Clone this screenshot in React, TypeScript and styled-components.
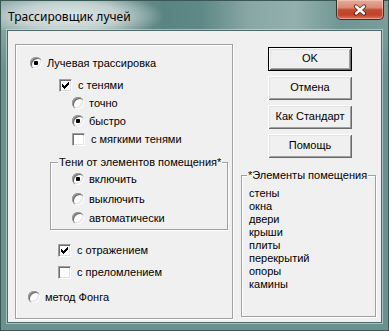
import React from "react";
import styled, { createGlobalStyle } from "styled-components";

const Global = createGlobalStyle`
  html, body { margin: 0; padding: 0; background: #6a9392; }
  body { width: 389px; height: 331px; overflow: hidden; }
  * { box-sizing: border-box; }
`;

const Window = styled.div`
  width: 389px;
  height: 331px;
  display: flex;
  flex-direction: column;
  border: 1px solid #3a5655;
  padding: 0 6px 7px 6px;
  background:
    linear-gradient(180deg, rgba(104, 145, 144, 0) 0px, rgba(104, 145, 144, 0) 28px, #689190 70px),
    linear-gradient(90deg, #86a3a1 0%, #819f9d 25%, #5a8482 42%, #5f8987 52%, #88a7a5 64%, #93b0ae 76%, #6f9694 88%, #7a9d9b 100%);
`;

const TitleBar = styled.div`
  height: 29px;
  flex: none;
  display: flex;
  align-items: flex-start;
  justify-content: space-between;
  margin: 0 -6px;
  padding: 0 4px 0 7px;
  background: radial-gradient(ellipse 95px 24px at 68px 15px, rgba(226, 235, 234, 0.95) 0%, rgba(220, 230, 229, 0.7) 55%, rgba(220, 230, 229, 0) 100%);
`;

const TitleText = styled.span`
  margin-top: 8px;
  font-family: "Noto Sans", "Liberation Sans", sans-serif;
  font-size: 12px;
  line-height: 15px;
  color: #000;
`;

const CloseButton = styled.div`
  width: 48px;
  height: 20px;
  margin-top: -1px;
  border: 1px solid #4a2a24;
  border-top: none;
  border-radius: 0 0 5px 5px;
  background: linear-gradient(180deg, #e9ab99 0%, #d98a74 40%, #c4492e 52%, #c3432a 78%, #dc7554 100%);
  box-shadow: inset 0 0 0 1px rgba(255, 220, 210, 0.45);
  display: flex;
  align-items: center;
  justify-content: center;
`;

const Client = styled.div`
  flex: 1;
  display: flex;
  align-items: flex-start;
  padding: 13px 5px 0 7px;
  background: #f0f0f0;
  border: 1px solid #4f6867;
  box-shadow: 0 0 0 1px rgba(220, 232, 231, 0.55);
  font-family: "Liberation Sans", Arial, sans-serif;
  font-size: 11px;
  color: #000;
`;

const GroupBox = styled.div<{ $w: number; $h: number; $left?: number; $top?: number }>`
  width: ${(p) => p.$w}px;
  height: ${(p) => p.$h}px;
  flex: none;
  margin-left: ${(p) => p.$left ?? 0}px;
  margin-top: ${(p) => p.$top ?? 0}px;
  border: 1px solid #a0a0a0;
  box-shadow: inset 1px 1px 0 #fff, 1px 1px 0 #fff;
  display: flex;
  flex-direction: column;
  align-items: flex-start;
`;

const GroupTitle = styled.div<{ $left: number }>`
  margin: -7px 0 0 ${(p) => p.$left}px;
  padding: 0 1px;
  background: #f0f0f0;
  line-height: 13px;
  white-space: nowrap;
`;

const Option = styled.div<{ $indent: number; $top?: number }>`
  height: 18px;
  display: flex;
  align-items: center;
  margin-left: ${(p) => p.$indent}px;
  margin-top: ${(p) => p.$top ?? 0}px;
  white-space: nowrap;
  line-height: 13px;
`;

const Radio = styled.span<{ $checked?: boolean }>`
  width: 12px;
  height: 12px;
  flex: none;
  margin-right: 5px;
  border-radius: 50%;
  background: #fff;
  box-shadow: inset 1px 1px 0 #a0a0a0, inset 2px 2px 0 #6e6e6e, inset -1px -1px 0 #fff, inset -2px -2px 0 #e3e3e3;
  display: flex;
  align-items: center;
  justify-content: center;
  &::after {
    content: "";
    display: ${(p) => (p.$checked ? "block" : "none")};
    width: 4px;
    height: 4px;
    border-radius: 1px;
    background: #000;
  }
`;

const Check = styled.span`
  width: 13px;
  height: 13px;
  flex: none;
  margin-right: 6px;
  background: #fff;
  border: 1px solid;
  border-color: #a0a0a0 #fff #fff #a0a0a0;
  box-shadow: inset 1px 1px 0 #6e6e6e, inset -1px -1px 0 #e3e3e3;
  display: flex;
  align-items: center;
  justify-content: center;
`;

const RightColumn = styled.div`
  width: 135px;
  flex: none;
  margin-left: 8px;
  padding-top: 3px;
  display: flex;
  flex-direction: column;
  align-items: flex-start;
`;

const ButtonStack = styled.div`
  margin-left: 27px;
  display: flex;
  flex-direction: column;
  gap: 5px;
`;

const Button = styled.div<{ $default?: boolean }>`
  width: 84px;
  height: 24px;
  display: flex;
  align-items: center;
  justify-content: center;
  padding-bottom: 2px;
  background: #f0f0f0;
  border: ${(p) => (p.$default ? "1px solid #000" : "none")};
  box-shadow: inset 1px 1px 0 #fff, inset -1px -1px 0 #696969, inset 2px 2px 0 #e3e3e3, inset -2px -2px 0 #a0a0a0;
`;

const ItemList = styled.ul`
  list-style: none;
  margin: 5px 0 0 7px;
  padding: 0;
  line-height: 13px;
`;

const CheckMark = () => (
  <svg width="7" height="7" viewBox="0 0 7 7" shapeRendering="crispEdges">
    <path
      fill="#000"
      d="M6 0h1v1h-1z M5 1h2v1h-2z M0 2h1v1h-1z M4 2h3v1h-3z M0 3h2v1h-2z M3 3h3v1h-3z M0 4h5v1h-5z M1 5h3v1h-3z M2 6h1v1h-1z"
    />
  </svg>
);

const CloseGlyph = () => (
  <svg width="14" height="12" viewBox="0 0 14 12">
    <path d="M3 2.5 L11 9.5 M11 2.5 L3 9.5" stroke="#3a1d18" strokeWidth="4.2" strokeLinecap="round" opacity="0.75" />
    <path d="M3 2.5 L11 9.5 M11 2.5 L3 9.5" stroke="#fff" strokeWidth="2.4" strokeLinecap="round" />
  </svg>
);

const items = ["стены", "окна", "двери", "крыши", "плиты", "перекрытий", "опоры", "камины"];

export default function App() {
  return (
    <>
      <Global />
      <Window>
        <TitleBar>
          <TitleText>Трассировщик лучей</TitleText>
          <CloseButton>
            <CloseGlyph />
          </CloseButton>
        </TitleBar>
        <Client>
          <GroupBox $w={218} $h={275}>
            <Option $indent={14} $top={9}>
              <Radio $checked />
              Лучевая трассировка
            </Option>
            <Option $indent={43} $top={4}>
              <Check>
                <CheckMark />
              </Check>
              с тенями
            </Option>
            <Option $indent={56}>
              <Radio />
              точно
            </Option>
            <Option $indent={56}>
              <Radio $checked />
              быстро
            </Option>
            <Option $indent={56}>
              <Check />
              с мягкими тенями
            </Option>
            <GroupBox $w={178} $h={68} $left={34} $top={14}>
              <GroupTitle $left={7}>Тени от элементов помещения*</GroupTitle>
              <Option $indent={21} $top={1}>
                <Radio $checked />
                включить
              </Option>
              <Option $indent={21} $top={2}>
                <Radio />
                выключить
              </Option>
              <Option $indent={21} $top={1}>
                <Radio />
                автоматически
              </Option>
            </GroupBox>
            <Option $indent={42} $top={11}>
              <Check>
                <CheckMark />
              </Check>
              с отражением
            </Option>
            <Option $indent={42} $top={4}>
              <Check />
              с преломлением
            </Option>
            <Option $indent={12} $top={7}>
              <Radio />
              метод Фонга
            </Option>
          </GroupBox>
          <RightColumn>
            <ButtonStack>
              <Button $default>OK</Button>
              <Button>Отмена</Button>
              <Button>Как Стандарт</Button>
              <Button>Помощь</Button>
            </ButtonStack>
            <GroupBox $w={135} $h={142} $top={17}>
              <GroupTitle $left={5}>*Элементы помещения</GroupTitle>
              <ItemList>
                {items.map((it) => (
                  <li key={it}>{it}</li>
                ))}
              </ItemList>
            </GroupBox>
          </RightColumn>
        </Client>
      </Window>
    </>
  );
}
